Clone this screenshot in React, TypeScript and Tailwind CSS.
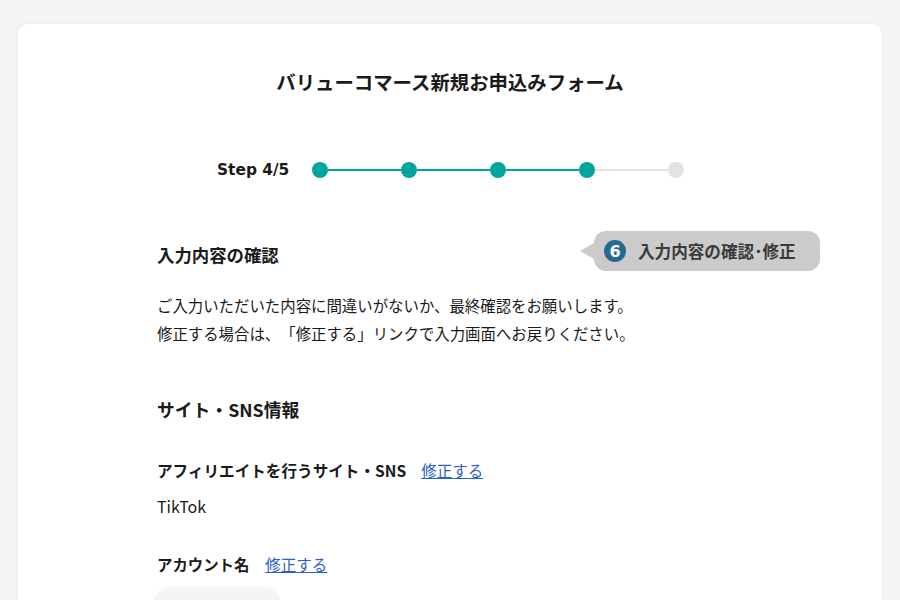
const font = { fontFamily: '"Noto Sans CJK JP", "Noto Sans", sans-serif' };

function Stepper() {
  return (
    <div className="flex h-[18px] items-center pl-[199px]">
      <span className="w-[95px] pt-[2px] font-['DejaVu_Sans'] text-[15.4px] font-bold leading-none text-[#1a1a1a]">Step 4/5</span>
      <div className="flex items-center">
        <span className="h-4 w-4 rounded-full bg-[#00a5a0]" />
        <span className="h-0.5 w-[73px] bg-[#00a5a0]" />
        <span className="h-4 w-4 rounded-full bg-[#00a5a0]" />
        <span className="h-0.5 w-[73px] bg-[#00a5a0]" />
        <span className="h-4 w-4 rounded-full bg-[#00a5a0]" />
        <span className="h-0.5 w-[73px] bg-[#00a5a0]" />
        <span className="h-4 w-4 rounded-full bg-[#00a5a0]" />
        <span className="h-0.5 w-[73px] bg-[#e3e3e3]" />
        <span className="h-4 w-4 rounded-full bg-[#e3e3e3]" />
      </div>
    </div>
  );
}

function Callout() {
  return (
    <div className="absolute left-[562px] top-[207px] flex items-center">
      <span className="h-0 w-0 border-y-[8px] border-r-[14px] border-y-transparent border-r-[#cbcbcb]" />
      <div className="flex h-10 w-[226px] items-center rounded-[12px] bg-[#cbcbcb] pl-[10px]">
        <span className="flex h-[22px] w-[22px] items-center justify-center rounded-full bg-[#256a93] pt-[1px] font-['DejaVu_Sans'] text-[16px] font-bold leading-none text-white">
          6
        </span>
        <span className="ml-3 text-[16.6px] font-bold leading-none text-[#3a3a3a]">
          入力内容の確認･修正
        </span>
      </div>
    </div>
  );
}

export default function App() {
  return (
    <div className="h-[600px] overflow-hidden bg-[#f4f4f4] px-[18px] pt-6 [text-spacing-trim:space-all]" style={font}>
      <div className="relative h-[640px] rounded-t-[10px] bg-white shadow-[0_0_4px_rgba(0,0,0,0.04)]">
        <h1 className="pt-[44px] text-center text-[19.4px] font-bold leading-[28px] text-[#1a1a1a]">
          バリューコマース新規お申込みフォーム
        </h1>
        <div className="pt-[65px]">
          <Stepper />
        </div>
        <Callout />
        <div className="pl-[139px]">
          <h2 className="pt-[64px] text-[17.4px] font-bold leading-6 text-[#1a1a1a]">入力内容の確認</h2>
          <p className="pt-[24px] text-[15.42px] leading-[28px] text-[#1a1a1a]">
            ご入力いただいた内容に間違いがないか、最終確認をお願いします。
            <br />
            修正する場合は、「修正する」リンクで入力画面へお戻りください。
          </p>
          <h2 className="pt-[49px] text-[17.8px] font-bold leading-[26px] text-[#1a1a1a]">サイト・SNS情報</h2>
          <div className="flex items-center gap-[15px] pt-[36px] leading-6">
            <span className="text-[15.6px] font-bold text-[#1a1a1a]">アフィリエイトを行うサイト・SNS</span>
            <a href="#" className="text-[15.5px] text-[#2a5fc9] underline">修正する</a>
          </div>
          <p className="pt-[12px] text-[16px] leading-6 text-[#1a1a1a]">TikTok</p>
          <div className="flex items-center gap-[16px] pt-[34px] leading-6">
            <span className="text-[15.4px] font-bold text-[#1a1a1a]">アカウント名</span>
            <a href="#" className="text-[15.5px] text-[#2a5fc9] underline">修正する</a>
          </div>
          <div className="mt-[11px] h-10 w-[128px] -translate-x-[4px] rounded-[18px] bg-[#f5f5f5] blur-[1px]" />
        </div>
      </div>
    </div>
  );
}
